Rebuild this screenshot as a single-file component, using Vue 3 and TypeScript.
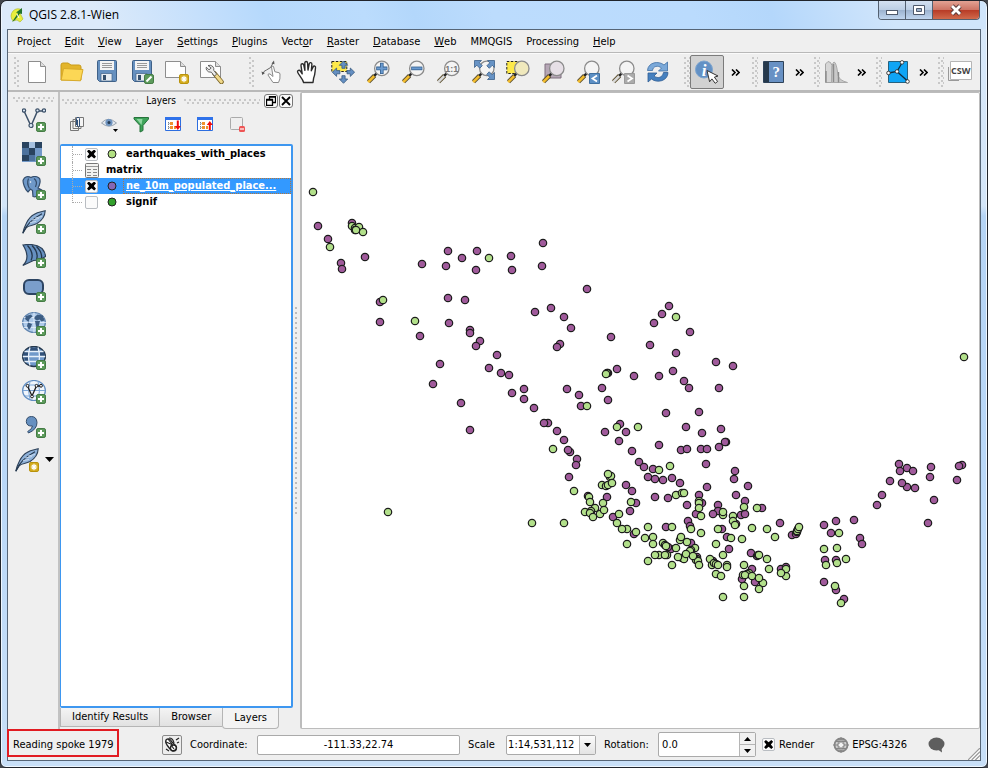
<script setup lang="ts">
import { ref } from 'vue'

interface Tool {
  icon: string
  label: string
  pressed?: boolean
}

interface Layer {
  name: string
  kind: 'point' | 'table'
  color?: string
  visible?: boolean
  selected?: boolean
}

const menus: [string, string, string][] = [
  ['Pro', 'j', 'ect'],
  ['', 'E', 'dit'],
  ['', 'V', 'iew'],
  ['', 'L', 'ayer'],
  ['', 'S', 'ettings'],
  ['', 'P', 'lugins'],
  ['Vect', 'o', 'r'],
  ['', 'R', 'aster'],
  ['', 'D', 'atabase'],
  ['', 'W', 'eb'],
  ['MMQGIS', '', ''],
  ['Processin', 'g', ''],
  ['', 'H', 'elp'],
]

const lens = (handle: string, fill = '#f4f4f4') =>
  `<path d="M2.5 21.8L8.6 15.6" stroke="#5d5030" stroke-width="4.4"/><path d="M2.2 22.1L8.4 15.8" stroke="${handle}" stroke-width="2.6"/><path d="M8.2 15.8L10.4 13.6" stroke="#222" stroke-width="2.4"/><circle cx="15.8" cy="8.4" r="7.2" fill="${fill}" stroke="#8b8b8b" stroke-width="1.3"/>`
const plus =
  '<rect x="14.5" y="14.5" width="9" height="9" rx="1.6" fill="#5d9b5c" stroke="#437a43"/><path d="M19 16v6M16 19h6" stroke="#fff" stroke-width="2"/>'
const star =
  '<rect x="14.5" y="14.5" width="9" height="9" rx="1.4" fill="#d3ab1c" stroke="#b8920b"/><path d="M19 15.8v6.4M15.8 19h6.4M16.8 16.8l4.4 4.4M21.2 16.8l-4.4 4.4" stroke="#fff" stroke-width="1.2"/>'
const disk =
  '<path d="M2.5 1.5q0-1 1-1h17q1 0 1 1v19q0 1-1 1h-16l-2-2z" fill="#6690bf" stroke="#3f6188"/><rect x="5" y="1" width="14" height="9" fill="#f4f4f4"/><path d="M7 3.5h10M7 5.5h10M7 7.5h10" stroke="#999"/><path d="M6 21v-7.5h11V21z" fill="#e9edf2" stroke="#3f6188" stroke-width=".7"/><rect x="8" y="15" width="3" height="5" fill="#36506d"/>'
const page =
  '<path d="M.5 1.5h15l5 5v11H.5z" fill="#fdfdfd" stroke="#8d8d8d"/><path d="M15.5 1.5v5h5" fill="#ddd" stroke="#8d8d8d"/>'
const feather =
  '<path d="M.8 23.2C2 17 6 7.500 12 4.500C16 1.800 20 1.800 23.200.800C23 6 20 10.500 15 13.500C10.500 16 7 15 4.500 17.500z" fill="#8fb2da" stroke="#2d4057" stroke-width="1.1"/><path d="M.8 23.2C4 15 11 8.500 20 3.800" fill="none" stroke="#24384e" stroke-width="1.100"/><path d="M8 12.500l6-1M10 10l7-1.500M13 8l7-1.500" stroke="#d7e5f5" stroke-width=".8"/>'
const dockGrid =
  '<path d="M.5 1.500h15v13H.5z" fill="#fff" stroke="#2d6ee0"/><path d="M0 1h16v3H0z" fill="#2f72ea"/><path d="M3.500 6v7M3.500 7.500h2M3.500 11.500h2" stroke="#77808c" stroke-dasharray="1 1"/><path d="M5 6h3v3H5zM5 10h3v3H5zM9 10h2v3H9z" fill="#f0912e"/>'
const hand =
  '<path d="M7.600 22.500C6.500 18.500 3 15.500 1.700 12.300C1 10.300 3.400 9.500 4.600 11.300L6.200 13.800L5 5.600C4.800 3.400 7.300 3 7.800 5.100L8.900 10.300L8.800 3.200C8.800.900 11.400.900 11.600 3.200L12 10L13.200 3.900C13.700 1.900 16 2.300 15.900 4.400L15.300 10.800L17 7.100C18 5.200 19.900 6 19.500 8C18.900 11.400 19.300 14.500 17.600 18.300L17 22.500z" fill="#fff" stroke="#2b2b2b" stroke-width="1.400" stroke-linejoin="round"/>'

const icons: Record<string, string> = {
  new: '<path d="M3.500 1.500h12l5 5v16h-17z" fill="#fff" stroke="#8d8d8d"/><path d="M15.500 1.500v5h5" fill="#ddd" stroke="#8d8d8d"/>',
  open: '<path d="M1 5q0-2 2-2h5l3 2h8q2 0 2 2v13H1z" fill="#e3b52c" stroke="#c99b19"/><path d="M3.500 8.500L23 9.500l-2.500 11.300L1.200 20z" fill="#fcd755" stroke="#d8aa2a"/>',
  save: disk,
  saveas:
    disk +
    '<rect x="14.500" y="14.500" width="9" height="9" rx="1.600" fill="#5d9b5c" stroke="#437a43"/><path d="M16.500 21.500l5-5" stroke="#fff" stroke-width="2"/>',
  print: page + star,
  manage:
    page +
    '<path d="M14.500 13.500l7 8.500" stroke="#7b6526" stroke-width="4.600" stroke-linecap="round"/><path d="M15 14l6.400 7.800" stroke="#f1d98b" stroke-width="3" stroke-linecap="round"/><path d="M8 5.500q3-1 5 1.200q1.200 1.700.7 3.500l3 4-2.400 1.800-3-3.800q-3 .4-4.600-2q-.8-1.400-.4-3l2.700 2.600 2.200-1.800z" fill="#ececec" stroke="#444" stroke-width=".8"/>',
  touch:
    '<path d="M12.500 6.500q-1.500-1-2 .5l1.500 9.500-3-2.500q-2-.8-2 1l5 7.500h5.500q2-3 1.500-8.500q-.5-1.800-2-1.500l-3.200-.8z" fill="#fff" stroke="#8a8a8a" stroke-linejoin="round"/><path d="M2 13.500q.5-2.500 3.500-3.500q5-1.500 6.500-7" fill="none" stroke="#555" stroke-width=".9"/><path d="M10.500 3.500l2.500-3 .5 3.800zM.5 11.500l.8 3.500 2.700-2z" fill="#555"/>',
  pan: hand,
  pansel:
    '<path d="M.8 1.500h15v10h-15z" fill="#fde94a" stroke="#222" stroke-dasharray="2.500 1.500"/><g fill="#648fc2" stroke="#36597f" stroke-width=".8"><path d="M12.500 1l4.200 4.300h-2.600v3h-3.200v-3H8.300zM12.500 23.300l4.200-4.300h-2.600v-3.300h-3.200V19H8.300zM1.300 12.200L5.600 8v2.600h3.300v3.200H5.600v2.600zM23.600 12.200L19.300 8v2.600H16v3.200h3.300v2.600z"/></g>',
  zoomin: lens('#f4bd2c') + '<path d="M15.800 2.800v11.200M10.200 8.400h11.200" stroke="#35608f" stroke-width="3.600"/><path d="M15.800 3.500v9.800M10.900 8.400h9.800" stroke="#6b9bd0" stroke-width="2"/>',
  zoomout: lens('#f4bd2c') + '<path d="M10.200 8.400h11.200" stroke="#35608f" stroke-width="3.600"/><path d="M10.900 8.400h9.800" stroke="#6b9bd0" stroke-width="2"/>',
  native: lens('#d9d9d9') + '<text x="15.800" y="11.600" text-anchor="middle" font-size="9" font-weight="bold" font-family="Liberation Sans, sans-serif" fill="#777">1:1</text>',
  full:
    lens('#f4bd2c') +
    '<g fill="#6793c5" stroke="#3a5f89" stroke-width=".8"><path d="M3.500.5h7L8.300 2.700l3 3-2.500 2.500-3-3-2.300 2.300zM23.500.5v7l-2.200-2.200-3 3-2.500-2.500 3-3L16.500.5zM23.500 19.500h-7l2.200-2.200-3-3 2.500-2.500 3 3 2.300-2.300z"/></g>',
  zoomsel: '<path d="M.8 1.500h12v12h-12z" fill="#fde94a" stroke="#222" stroke-dasharray="2.500 1.500"/>' + lens('#f4bd2c', '#f0e9bd'),
  zoomlayer: '<path d="M4 4h16v14H4z" fill="#b6a7b6" stroke="#7f6f7f"/>' + lens('#f4bd2c', '#e6dfe6'),
  last: lens('#f4bd2c') + '<path d="M13.500 13.500h10v10h-10z" fill="#5c8fc4" stroke="#3f6f9f"/><path d="M21 15.500l-4.500 3 4.500 3" fill="none" stroke="#fff" stroke-width="1.800"/>',
  next: lens('#d9d9d9') + '<path d="M13.500 13.500h10v10h-10z" fill="#ababab" stroke="#999"/><path d="M16.500 15.500l4.500 3-4.500 3" fill="none" stroke="#fff" stroke-width="1.800"/>',
  refresh:
    '<path d="M1.500 10.500C2 2 13 .5 18 5l3.500-3v9h-9l3-3C12 5 7 6 6.500 10.500z" fill="#7ba9d9" stroke="#3f6fa5" stroke-width=".8"/><path d="M22 12.500C22 21 11 23.500 5.500 19L2 22v-9h9l-3 3c4 3 8.500 1.500 9.500-3.500z" fill="#4680bf" stroke="#315e94" stroke-width=".8"/>',
  identify:
    '<circle cx="9" cy="9.500" r="8.500" fill="#6391c5" stroke="#7ca4cf"/><text x="9" y="15.500" text-anchor="middle" font-size="17" font-style="italic" font-weight="bold" font-family="Liberation Serif, serif" fill="#fff">i</text><path d="M12 10.500l11 5.500-3.600 1.200 3.200 4.300-2.400 1.800-3.300-4.400-2.300 2.900z" fill="#fff" stroke="#333"/>',
  help:
    '<path d="M1.500 1.500h20v21h-20z" fill="#6891c4" stroke="#2e4258"/><path d="M2 2h5v20H2z" fill="#26394c"/><text x="14.300" y="17" text-anchor="middle" font-size="15" font-family="Liberation Serif, serif" font-weight="bold" fill="#fff">?</text>',
  histogram:
    '<path d="M1.500 22.500V4L4 1.500q3 0 4 4v17z" fill="#d6d6d6" stroke="#a5a5a5"/><path d="M7.500 22.500Q7.500 2 10 2t4 13.500q1.500 5 9.500 7z" fill="#c9c9c9" stroke="#aaa"/><path d="M9.500 4v18M2 11v11.500M14.500 12v10.500" stroke="#8a8a8a" stroke-width="1.400"/>',
  topology:
    '<path d="M2.500 1.500h19v21h-19z" fill="#10a5f5" stroke="#27627f"/><path d="M2.500 13l8.500-1.500L16.500 2M11 11.500l10.500 9.500" fill="none" stroke="#122c3e" stroke-width="1.300"/><g fill="#fff" stroke="#333" stroke-width=".9"><circle cx="2.500" cy="13" r="1.800"/><circle cx="11" cy="11.500" r="1.800"/><circle cx="16" cy="2.400" r="1.800"/><circle cx="21.500" cy="21.500" r="1.800"/></g>',
  csw:
    '<path d="M.5 7v13.500H11" fill="#eee" stroke="#999"/><path d="M2.500 1.500h21v18h-21z" fill="#fff" stroke="#b5b5b5"/><text x="12.800" y="13.700" text-anchor="middle" font-size="9" font-weight="bold" font-family="Open Sans, sans-serif" fill="#444">CSW</text>',
  vector:
    '<path d="M2 3l7 15 6.500-15h6" fill="none" stroke="#3c5068" stroke-width="1.500"/><g fill="#dce8f4" stroke="#3c5068" stroke-width="1.200"><circle cx="2" cy="2.500" r="1.700"/><circle cx="9" cy="17.500" r="2"/><circle cx="15.500" cy="2.500" r="1.700"/><circle cx="22" cy="2.500" r="1.700"/></g>' + plus,
  raster:
    '<path d="M0 0h20v20H0z" fill="#7299c8"/><path d="M0 0h7v6H0zM13 0h7v6h-7zM7 6h6v7H7zM0 13h7v6H0z" fill="#29435f"/><path d="M0 6h7v7H0zM7 13h6v6H7z" fill="#4d729d"/><path d="M7 0h6v6H7z" fill="#a6c1e0"/>' + plus,
  postgis:
    '<path d="M2.500 2C5-.5 8 1 9 1.500c3-1.500 6-1 8 .5c2 1.500 1 7-1 10l3 1.500-4 1v5q-1 2-4 1l-.5-6-2-1.500-2.500 3C3 14 .500 6 1.200 4z" fill="#6e98c8" stroke="#344d6b" stroke-width="1.200"/><path d="M6.500 2.500q-2 5 1 10M12 2.500q4 3 1.500 8.500" fill="none" stroke="#344d6b" stroke-width="1.200"/><circle cx="8.500" cy="6" r=".8" fill="#fff"/>' + plus,
  spatialite: feather + plus,
  mssql:
    '<path d="M1 1q12-2 19 3.500q3.500 4 3.500 8q-6 4-12 4L.8 21.500Q9 14 1 1z" fill="#6690c0" stroke="#2c4058" stroke-width="1.200"/><path d="M5.500 1.500q7 8 3.500 15M10 1.500q7 7 4.500 14.500M14.500 2.500q6 6 5 12" fill="none" stroke="#23364b" stroke-width="1.300"/>' + plus,
  oracle: '<rect x="2" y="2" width="19" height="14" rx="5" fill="#7a9ecb" stroke="#2c4462" stroke-width="2"/>' + plus,
  wms:
    '<ellipse cx="12" cy="10.500" rx="11.400" ry="10" fill="#aecaea" stroke="#6084ae" stroke-width="1.200"/><path d="M0 10.500h24M12 .5v20M2 5.500h20M2 15.500h20" stroke="#e8f1fb" stroke-width=".8"/><path d="M4 4l5-1.500 1.500 2-3 2.500-1 3L3 7zM6 10.500l4 1.500-1 3-2 3-2-4zM12.500 5l3-2.500 5.500 1 1.500 5-3 1-2-2-2.500 1-2.500-1.500zM13 9h5l-1.500 6-2 1z" fill="#3d5d83"/>' + plus,
  wcs:
    '<ellipse cx="12" cy="10.500" rx="11.400" ry="10" fill="#7099ca" stroke="#25384d" stroke-width="1.400"/><path d="M2 5.500h5v5H1zM17 5.500h5l1 5h-6zM3 15.500h4v-5H2zM7 1.800h10v3.500H7z" fill="#31517a"/><path d="M.8 10.500h22.400M2.500 5.500h19M2.500 15.500h19M8 1.500q-3 9 0 18M16 1.500q3 9 0 18" fill="none" stroke="#e8f1fb" stroke-width="1.300"/>' + plus,
  wfs:
    '<ellipse cx="12" cy="10.500" rx="11.400" ry="10" fill="#f0f5fb" stroke="#5f8cc0" stroke-width="1.200"/><path d="M.8 10.500h22.400M2.500 5h19M2.500 16h19M8 1.500q-3 9 0 18M16 1.500q3 9 0 18" fill="none" stroke="#7ba5d6" stroke-width="1"/><path d="M5.500 6l4.500 10L14.500 6h5" fill="none" stroke="#1b1b1b" stroke-width="1.300"/><g fill="#fff" stroke="#1b1b1b"><circle cx="5.500" cy="5.800" r="1.400"/><circle cx="10" cy="16.500" r="1.400"/><circle cx="14.500" cy="5.800" r="1.400"/><circle cx="19" cy="5.800" r="1.400"/></g>' + plus,
  csv: '<path d="M9.500 2.500q5 0 5.500 6q0 7-8.500 10.500l-.8-1.500q4.500-2.500 4.800-5.500q-6 .5-6.200-4.500q.2-5 5.200-5z" fill="#6690c0" stroke="#344d6b"/>' + plus,
  newlayer: feather + star,
  group: '<path d="M1.500 5.500h8v9h-8zM4 3.500h8v9H4z" fill="#f4f4f4" stroke="#777"/><path d="M6.500 1.500h8v9h-8z" fill="#f4f4f4" stroke="#777"/><path d="M7.500 9V2.500q1.500-3 3 0V10q-1 2-2 0V4" fill="none" stroke="#31517a"/>',
  eye: '<path d="M.5 7Q7-.5 15.500 7Q8 13.500.5 7z" fill="#e4e9ef" stroke="#98a2ad"/><circle cx="8" cy="6.500" r="3.600" fill="#6f94c0"/><circle cx="8" cy="6.500" r="1.500" fill="#263b52"/><path d="M12 13h5l-2.500 3z" fill="#000"/>',
  filter: '<path d="M1 1.500h14.500v1.500L10 9.500v5L7 16V9.500L1 3z" fill="#3da359" stroke="#26733b"/><path d="M3.500 3h6L8.500 9z" fill="#8ed6a0"/>',
  expand: dockGrid + '<path d="M11.800 4.500h2V10h2l-3 4-3-4h2z" fill="#f00c0c"/>',
  collapse: dockGrid + '<path d="M11.800 14v-5h-2l3-4 3 4h-2v5z" fill="#f00c0c"/>',
  remove: '<rect x="1.500" y="1.500" width="12" height="12" rx="1" fill="#efefef" stroke="#aaa"/><rect x="10" y="10" width="6" height="6" rx="1.500" fill="#e55"/><path d="M11 13h4" stroke="#fff" stroke-width="1.200"/>',
}

const fileTools: Tool[] = [
  { icon: 'new', label: 'New project' },
  { icon: 'open', label: 'Open project' },
  { icon: 'save', label: 'Save project' },
  { icon: 'saveas', label: 'Save project as' },
  { icon: 'print', label: 'New print composer' },
  { icon: 'manage', label: 'Composer manager' },
]
const navTools: Tool[] = [
  { icon: 'touch', label: 'Touch zoom and pan' },
  { icon: 'pan', label: 'Pan map' },
  { icon: 'pansel', label: 'Pan map to selection' },
  { icon: 'zoomin', label: 'Zoom in' },
  { icon: 'zoomout', label: 'Zoom out' },
  { icon: 'native', label: 'Zoom to native resolution' },
  { icon: 'full', label: 'Zoom full' },
  { icon: 'zoomsel', label: 'Zoom to selection' },
  { icon: 'zoomlayer', label: 'Zoom to layer' },
  { icon: 'last', label: 'Zoom last' },
  { icon: 'next', label: 'Zoom next' },
  { icon: 'refresh', label: 'Refresh' },
]
const overflowTools: Tool[] = [
  { icon: 'identify', label: 'Identify features', pressed: true },
  { icon: 'help', label: 'Help contents' },
  { icon: 'histogram', label: 'Local histogram stretch' },
  { icon: 'topology', label: 'Topology checker' },
]
const sideTools: Tool[] = [
  { icon: 'vector', label: 'Add vector layer' },
  { icon: 'raster', label: 'Add raster layer' },
  { icon: 'postgis', label: 'Add PostGIS layer' },
  { icon: 'spatialite', label: 'Add SpatiaLite layer' },
  { icon: 'mssql', label: 'Add MSSQL layer' },
  { icon: 'oracle', label: 'Add Oracle layer' },
  { icon: 'wms', label: 'Add WMS layer' },
  { icon: 'wcs', label: 'Add WCS layer' },
  { icon: 'wfs', label: 'Add WFS layer' },
  { icon: 'csv', label: 'Add delimited text layer' },
]
const dockTools: Tool[] = [
  { icon: 'group', label: 'Add group' },
  { icon: 'eye', label: 'Manage layer visibility' },
  { icon: 'filter', label: 'Filter legend' },
  { icon: 'expand', label: 'Expand all' },
  { icon: 'collapse', label: 'Collapse all' },
  { icon: 'remove', label: 'Remove layer' },
]

const layers = ref<Layer[]>([
  { name: 'earthquakes_with_places', kind: 'point', color: '#b2e082', visible: true },
  { name: 'matrix', kind: 'table' },
  { name: 'ne_10m_populated_place...', kind: 'point', color: '#8567b5', visible: true, selected: true },
  { name: 'signif', kind: 'point', color: '#33a02c', visible: false },
])

const dockTabs = ['Identify Results', 'Browser', 'Layers']
const activeTab = ref('Layers')
const coordinate = ref('-111.33,22.74')
const scale = ref('1:14,531,112')
const rotation = ref('0.0')
const render = ref(true)

const parse = (text: string) => text.trim().split(/\s+/).map((pair) => pair.split(',').map(Number))

const places = parse(`
318,226 328,239 352,223 365,257 341,263 342,269 422,264 448,251 446,266 462,258 477,251 476,270 511,256 512,270
543,243 542,266 380,302 380,322 420,336 448,298 465,300 449,323 470,330 470,333 480,341 476,346 497,355 440,364
433,384 489,368 501,373 509,375 512,393 524,389 524,399 534,408 461,403 470,430 548,423 544,423 557,431 564,440
535,312 551,308 564,317 571,328 560,344 557,347 587,289 567,389 579,395 581,406 669,306 662,314 654,323 690,332
650,345 676,353 611,337 716,362 733,366 617,369 608,373 634,376 659,376 673,371 684,381 689,388 719,388 602,388
608,400 666,413 699,412 620,424 605,432 626,432 619,441 659,445 632,451 686,427 702,433 721,429 681,450 687,449
701,449 707,449 719,447 726,442 725,442 706,464 570,452 568,450 577,459 576,465 569,477 639,462 644,467 653,469
735,471 734,479 748,486 648,477 655,479 663,480 672,478 680,483 626,485 632,491 636,503 630,511 707,487 699,495
736,495 745,501 655,497 668,498 687,505 718,505 718,511 713,514 762,508 741,515 745,514 696,514 607,497 613,517
588,496 688,521 690,526 702,503 666,527 634,534 722,529 736,524 727,537 729,549 691,543 671,549 668,547 780,523
792,535 796,534 797,532 751,553 757,556 752,569 742,579 755,582 781,569 786,567 697,557 713,561 899,464 907,468
900,471 913,471 931,467 962,465 959,466 957,480 930,477 890,481 907,487 902,483 915,488 882,495 877,505 934,500
928,523 824,525 836,521 854,520 831,533 860,538 862,544 825,560 836,560 824,582 836,590 844,599`)

const quakes = parse(`
313,192 352,226 355,228 359,227 363,232 355,230 356,230 330,247 489,258 383,300 415,321 587,406 553,449 676,317
607,373 606,374 617,427 638,427 659,470 670,466 388,512 532,523 574,491 564,523 610,477 611,476 608,474 602,485
606,486 608,485 612,483 589,497 590,502 585,512 595,508 591,511 590,513 603,503 600,514 604,510 593,517 619,514
617,523 627,529 622,529 636,532 627,544 645,538 653,537 653,544 648,527 672,527 631,502 676,495 682,493 684,493
699,501 699,503 699,508 701,516 691,529 701,533 723,515 723,512 718,529 733,516 733,521 735,525 731,538 742,539
744,507 757,508 752,528 767,529 775,537 797,531 798,529 799,527 716,544 723,555 648,561 672,565 659,555 655,555
667,555 665,555 663,543 665,545 666,546 676,548 680,540 681,537 687,542 695,548 691,550 690,551 682,558 684,559
678,557 686,554 697,559 696,560 698,561 693,556 699,565 710,559 712,565 714,563 716,564 718,565 727,565 727,567
716,574 721,576 723,597 744,597 744,565 743,575 749,573 747,574 745,575 752,576 763,583 759,578 759,589 744,586
758,555 759,555 767,559 769,569 786,576 786,569 781,573 964,357 839,533 824,549 837,548 846,559 826,565 837,563
835,586 841,603`)
</script>

<template>
  <div class="window">
    <header class="titlebar">
      <svg class="app-icon" viewBox="0 0 14 16" aria-hidden="true">
        <path d="M3 4Q7 0 12 3l-2 3 3 6-3 3-3-2-4 1Q-1 9 3 4z" fill="#e8ee3c" stroke="#a9b52c" stroke-width=".6" />
        <path d="M2 15L8 6l-2-.5L12 1v6L10 6.500 5 13z" fill="#23742c" />
        <path d="M7 7l2 4" stroke="#fff" />
      </svg>
      <h1>QGIS 2.8.1-Wien</h1>
      <div class="caption">
        <button aria-label="Minimize"><svg viewBox="0 0 14 12"><rect x="1.500" y="6.500" width="11" height="4" fill="#fff" stroke="#4f5a6c" /></svg></button>
        <button aria-label="Maximize"><svg viewBox="0 0 14 12"><path d="M1.500 1.500h11v9h-11z" fill="#fff" stroke="#4f5a6c" /><path d="M4.500 4.500h5v3h-5z" fill="#9eb3cc" stroke="#4f5a6c" /></svg></button>
        <button class="close" aria-label="Close"><svg viewBox="0 0 14 12"><path d="M3 2l8 8M11 2l-8 8" stroke="#5b3a3a" stroke-width="4.600" /><path d="M3 2l8 8M11 2l-8 8" stroke="#fff" stroke-width="2.800" /></svg></button>
      </div>
    </header>

    <div class="client">
      <nav class="menubar">
        <button v-for="m in menus" :key="m.join('')">{{ m[0] }}<u>{{ m[1] }}</u>{{ m[2] }}</button>
      </nav>

      <div class="toolbars" role="toolbar" aria-label="Main toolbars">
        <div class="group file">
          <i class="grip"></i>
          <button v-for="t in fileTools" :key="t.icon" class="tool" :aria-label="t.label"><svg class="icon" viewBox="0 0 24 24" fill="none" v-html="icons[t.icon]"></svg></button>
        </div>
        <div class="group nav">
          <i class="grip"></i>
          <button v-for="t in navTools" :key="t.icon" class="tool" :aria-label="t.label"><svg class="icon" viewBox="0 0 24 24" fill="none" v-html="icons[t.icon]"></svg></button>
        </div>
        <div v-for="t in overflowTools" :key="t.icon" class="group compact">
          <i class="grip"></i>
          <button class="tool" :class="{ pressed: t.pressed }" :aria-label="t.label"><svg class="icon" viewBox="0 0 24 24" fill="none" v-html="icons[t.icon]"></svg></button>
          <button class="more" aria-label="More tools"><svg viewBox="0 0 9 7"><path d="M1 .5l3 3-3 3M5 .5l3 3-3 3" fill="none" stroke="#000" stroke-width="1.600" /></svg></button>
        </div>
        <div class="group compact">
          <i class="grip"></i>
          <button class="tool" aria-label="Catalogue search"><svg class="icon" viewBox="0 0 24 24" fill="none" v-html="icons.csw"></svg></button>
        </div>
      </div>

      <div class="workspace">
        <aside class="sidebar" role="toolbar" aria-label="Manage layers">
          <i class="grip flat"></i>
          <button v-for="t in sideTools" :key="t.icon" class="tool" :aria-label="t.label"><svg class="icon" viewBox="0 0 24 24" fill="none" v-html="icons[t.icon]"></svg></button>
          <button class="tool split" aria-label="New layer">
            <svg class="icon" viewBox="0 0 24 24" fill="none" v-html="icons.newlayer"></svg>
            <svg class="arrow" viewBox="0 0 9 5"><path d="M0 0h9L4.500 5z" /></svg>
          </button>
        </aside>

        <section class="dock" aria-label="Layers panel">
          <div class="dock-title">
            <i class="grip flat"></i>
            <h2>Layers</h2>
            <i class="grip flat"></i>
            <div class="dock-buttons">
              <button aria-label="Float panel"><svg viewBox="0 0 10 10"><path d="M3.500 3V.5h6v6H7M3.500 1h6M.5 3.500h6v6h-6zM.5 4h6" fill="none" stroke="#000" stroke-width="1.300" /></svg></button>
              <button aria-label="Close panel"><svg viewBox="0 0 10 10"><path d="M1 1l8 8M9 1L1 9" stroke="#000" stroke-width="1.800" /></svg></button>
            </div>
          </div>
          <div class="dock-tools">
            <button v-for="t in dockTools" :key="t.icon" :aria-label="t.label"><svg viewBox="0 0 16 16" fill="none" v-html="icons[t.icon]"></svg></button>
          </div>
          <ul class="tree">
            <li v-for="layer in layers" :key="layer.name" :class="{ selected: layer.selected }">
              <i class="branch"></i>
              <template v-if="layer.kind === 'point'">
                <input :id="layer.name" v-model="layer.visible" type="checkbox" />
                <svg class="symbol" viewBox="0 0 10 10"><circle cx="5" cy="5" r="4" :fill="layer.color" stroke="#222" /></svg>
                <label :for="layer.name">{{ layer.name }}</label>
              </template>
              <template v-else>
                <svg class="table-icon" viewBox="0 0 14 15"><rect x=".5" y=".5" width="13" height="14" rx="1" fill="#f2f2f0" stroke="#777" /><path d="M1 3.500h12" stroke="#999" /><path d="M2 6.500h10M2 9.500h10M2 12.500h10" stroke="#888" stroke-dasharray="4 2" /></svg>
                <span class="name">{{ layer.name }}</span>
              </template>
            </li>
          </ul>
          <div class="tabs" role="tablist">
            <button v-for="tab in dockTabs" :key="tab" role="tab" :class="{ active: tab === activeTab }" :aria-selected="tab === activeTab" @click="activeTab = tab">{{ tab }}</button>
          </div>
        </section>

        <div class="splitter"><i></i></div>

        <main class="map">
          <svg role="img" aria-label="Map canvas">
            <g transform="translate(-302 -93)" stroke="#1c1c1c" stroke-width="1.200">
              <g fill="#a05a9b"><circle v-for="(p, i) in places" :key="i" :cx="p[0]" :cy="p[1]" r="3.700" /></g>
              <g fill="#b2e08a"><circle v-for="(p, i) in quakes" :key="i" :cx="p[0]" :cy="p[1]" r="3.700" /></g>
            </g>
          </svg>
        </main>
      </div>

      <footer class="status">
        <output class="message">Reading spoke 1979</output>
        <button class="toggle" aria-label="Toggle extents and mouse position">
          <svg viewBox="0 0 16 16" fill="none" stroke="#222"><path d="M2 3q3-3 6 2l3 3q3 3 0 5t-5-1L3 8Q1 5 2 3z" fill="#fff" stroke-width="1.300" /><path d="M4 2l4 5M2 5l7 3M7 8l3 4M5 1q4 0 5 5M12 3l3-2M13 6l2-1M2 12l3 2" stroke-width="1.200" /><circle cx="9.500" cy="11" r="3" stroke-width="1.300" /></svg>
        </button>
        <label class="coord-label" for="coord">Coordinate:</label>
        <input id="coord" v-model="coordinate" class="coord" type="text" />
        <label class="scale-label" for="scale">Scale</label>
        <div class="combo">
          <select id="scale" v-model="scale"><option>1:14,531,112</option></select>
          <span class="drop"><svg viewBox="0 0 9 5"><path d="M0 0h9L4.500 5z" /></svg></span>
        </div>
        <label class="rot-label" for="rot">Rotation:</label>
        <div class="spin">
          <input id="rot" v-model="rotation" type="text" />
          <div class="steps">
            <button aria-label="Increase rotation"><svg viewBox="0 0 7 4"><path d="M0 4h7L3.500 0z" /></svg></button>
            <button aria-label="Decrease rotation"><svg viewBox="0 0 7 4"><path d="M0 0h7L3.500 4z" /></svg></button>
          </div>
        </div>
        <input id="render" v-model="render" class="render" type="checkbox" />
        <label for="render">Render</label>
        <button class="crs">
          <svg viewBox="0 0 16 16" fill="none" stroke="#858585"><circle cx="8" cy="8" r="6.500" fill="#d2d2d2" stroke-width="1.800" /><ellipse cx="8" cy="8" rx="3" ry="6" /><path d="M0 8h16M8 0v16M3 4.500h10M3 11.500h10" /><path d="M8 4.500L11.500 8 8 11.500 4.500 8z" fill="#f2f2f2" /></svg>
          EPSG:4326
        </button>
        <button class="bubble" aria-label="Messages"><svg viewBox="0 0 17 16"><ellipse cx="8.500" cy="7" rx="8" ry="6.500" fill="#5e5e5e" /><path d="M9 12l5 3.500-.5-5z" fill="#5e5e5e" /></svg></button>
        <svg class="resize" viewBox="0 0 13 13"><path d="M0 13L13 0M4 13l9-9M8 13l5-5" stroke="#999" stroke-width="1.300" /><path d="M2 13L13 2M6 13l7-7M10 13l3-3" stroke="#fff" /></svg>
      </footer>
    </div>
  </div>
</template>

<style>
body {
  margin: 0;
  background: #43464c;
}
</style>

<style scoped>
.window {
  box-sizing: border-box;
  height: 100vh;
  min-height: 480px;
  display: flex;
  flex-direction: column;
  padding: 0 6px 6px;
  border: 1px solid #20242b;
  border-radius: 7px 7px 6px 6px;
  background: linear-gradient(#d8e8f9, #d3e5f8 205px, #b5d4f5 215px, #b9d7f7 60%, #c8dff7);
  box-shadow: inset 0 0 0 1px #eef6fe;
  font: 11px/16px "DejaVu Sans Condensed", "DejaVu Sans", sans-serif;
  color: #000;
}
button,
input,
select {
  font: inherit;
  color: inherit;
  margin: 0;
}
button {
  display: flex;
  align-items: center;
  justify-content: center;
  padding: 0;
  border: 0;
  background: none;
}
svg {
  display: block;
  flex: none;
}
h1,
h2,
ul {
  margin: 0;
  padding: 0;
  font-weight: normal;
}
.titlebar {
  flex: none;
  height: 28px;
  margin: 0 -5px;
  padding: 0 6px 0 8px;
  display: flex;
  align-items: center;
  border-radius: 6px 6px 0 0;
  background: linear-gradient(70deg, #dceafa 0 10%, #c6e0fc 20%, #b6d9fc 27%, #bbdcfd 37%, #b3d7fb 42%, #bcdcfd 50%, #badbfd 70%, #b4d7fb 78%, #d0e5fb 90%);
}
.app-icon {
  width: 14px;
  height: 16px;
}
h1 {
  margin-left: 5px;
  font: 12px/18px "Open Sans", "Noto Sans", sans-serif;
}
.caption {
  align-self: flex-start;
  margin-left: auto;
  display: flex;
  border: 1px solid #536070;
  border-top: 0;
  border-radius: 0 0 4px 4px;
  overflow: hidden;
}
.caption button {
  width: 27px;
  height: 18px;
  border-right: 1px solid #536070;
  background: linear-gradient(#d4e1f1, #bccee4 48%, #9bb2cf 50%, #bfd5ee);
}
.caption svg {
  width: 14px;
  height: 12px;
}
.caption .close {
  width: 46px;
  border-right: 0;
  background: linear-gradient(#e2a294, #cd7565 48%, #b73a25 50%, #d06a4c);
}
.client {
  flex: 1;
  min-height: 0;
  display: flex;
  flex-direction: column;
  border: 1px solid #566576;
  background: #efefef;
}
.menubar {
  flex: none;
  height: 20px;
  display: flex;
  padding: 2px 0 0 2px;
  border-bottom: 1px solid #b8b8b8;
}
.menubar button {
  padding: 0 7px;
}
.toolbars {
  flex: none;
  height: 36px;
  display: flex;
  align-items: center;
  padding-left: 6px;
  border-top: 1px solid #fafafa;
  border-bottom: 2px solid #b9b9b9;
}
.group {
  display: flex;
  align-items: center;
}
.file,
.nav {
  gap: 1px;
}
.file {
  margin-right: 20px;
}
.nav {
  margin-right: 9px;
}
.nav .grip {
  margin-right: 1px;
}
.compact {
  margin-right: 6px;
}
.grip {
  flex: none;
  width: 5px;
  height: 30px;
  background:
    radial-gradient(circle at 1px 1px, #c8c8c8 1px, transparent 1px) 0 0 / 5px 5px,
    radial-gradient(circle at 1px 1px, #c8c8c8 1px, transparent 1px) 3px 3px / 5px 5px;
}
.tool {
  width: 34px;
  height: 34px;
}
.icon {
  width: 24px;
  height: 24px;
}
.compact .grip {
  width: 6px;
}
.compact .tool {
  box-sizing: border-box;
  width: 32px;
}
.compact .pressed {
  width: 34px;
  border: 1px solid #7b7b7b;
  border-radius: 2px;
  background: #d2d2d2;
}
.more {
  width: 18px;
  height: 34px;
}
.pressed + .more {
  width: 22px;
}
.more svg {
  width: 9px;
  height: 7px;
}
.workspace {
  flex: 1;
  min-height: 0;
  display: flex;
}
.sidebar {
  flex: none;
  width: 50px;
  display: flex;
  flex-direction: column;
  align-items: center;
  padding-top: 5px;
  border-right: 2px solid #c2c2c2;
}
.grip.flat {
  height: 5px;
}
.sidebar .grip {
  width: 41px;
}
.sidebar .icon {
  margin-top: 2px;
}
.sidebar .tool {
  padding-left: 2px;
}
.sidebar .split {
  width: 50px;
  gap: 6px;
  padding-left: 3px;
}
.arrow {
  width: 9px;
  height: 5px;
}
.dock {
  flex: none;
  width: 233px;
  display: flex;
  flex-direction: column;
}
.dock-title {
  height: 18px;
  display: flex;
  align-items: center;
  gap: 8px;
  padding-left: 2px;
}
.dock-title .grip {
  flex: 1;
}
h2 {
  font-size: 10px;
}
.dock-buttons {
  display: flex;
  gap: 1px;
  margin-left: -4px;
}
.dock-buttons button {
  width: 14px;
  height: 14px;
  border: 1px solid #777;
  border-radius: 3px;
  background: #fafafa;
  box-sizing: border-box;
}
.dock-buttons svg {
  width: 10px;
  height: 10px;
}
.dock-tools {
  height: 28px;
  display: flex;
  gap: 16px;
  padding: 0 0 6px 9px;
}
.dock-tools svg {
  width: 16px;
  height: 16px;
  overflow: visible;
}
.tree {
  flex: 1;
  min-height: 0;
  border: 2px solid #3e97f0;
  border-left-width: 1px;
  border-radius: 2px;
  background: #fff;
  list-style: none;
  font-weight: bold;
}
.tree li {
  height: 16px;
  display: flex;
  align-items: center;
  padding-left: 11px;
}
.tree .selected {
  background: #3399ff;
  color: #fff;
  text-decoration: underline;
}
.branch {
  align-self: stretch;
  width: 10px;
  margin-right: 2px;
  border-left: 1px dotted #aaa;
  background: linear-gradient(90deg, #aaa 50%, transparent 50%) 0 8px / 2px 1px repeat-x;
}
.tree li:last-child .branch {
  height: 9px;
  align-self: flex-start;
}
input[type="checkbox"] {
  flex: none;
  appearance: none;
  box-sizing: border-box;
  width: 13px;
  height: 13px;
  display: grid;
  place-items: center;
  border: 1px solid #b9bdc2;
  border-radius: 2px;
  background: #fbfbfb;
}
input[type="checkbox"]:checked::before {
  content: "";
  width: 9px;
  height: 9px;
  background: #000;
  clip-path: polygon(0 20%, 20% 0, 50% 25%, 80% 0, 100% 20%, 75% 50%, 100% 80%, 80% 100%, 50% 75%, 20% 100%, 0 80%, 25% 50%);
}
.symbol {
  width: 10px;
  height: 10px;
  margin: 0 6px 0 9px;
}
.tree label {
  flex: 1;
  min-width: 0;
  height: 16px;
  padding-left: 3px;
  box-sizing: border-box;
  white-space: nowrap;
}
.selected label {
  outline: 1px dotted #b4763a;
  outline-offset: -1px;
}
.table-icon {
  width: 14px;
  height: 15px;
}
.name {
  margin-left: 7px;
}
.tabs {
  flex: none;
  height: 21px;
  display: flex;
  align-items: flex-start;
}
.tabs button {
  height: 19px;
  padding: 0 11px;
  border: 1px solid #b5b5b5;
  border-top: 0;
  border-right: 0;
  background: linear-gradient(#f4f4f4, #e1e1e1);
}
.tabs .active {
  height: 21px;
  border-right: 1px solid #b5b5b5;
  border-radius: 0 0 4px 4px;
  background: #f3f3f3;
}
.splitter {
  flex: none;
  width: 7px;
  display: flex;
  align-items: center;
  justify-content: center;
}
.splitter i {
  width: 3px;
  height: 208px;
  background: radial-gradient(circle at 1px 1px, #bcbcbc 1px, transparent 1px) 0 0 / 5px 5px;
}
.map {
  flex: 1;
  min-width: 0;
  display: flex;
  border: solid #bcbcbc;
  border-width: 1px 1px 1px 2px;
  border-radius: 2px;
  background: #fff;
}
.map svg {
  flex: 1;
  width: 100%;
  height: 100%;
}
.status {
  flex: none;
  height: 31px;
  display: flex;
  align-items: center;
}
.message {
  align-self: flex-start;
  box-sizing: border-box;
  width: 112px;
  height: 28px;
  margin-left: -1px;
  padding-left: 4px;
  border: 2px solid #e11b22;
  line-height: 27px;
  white-space: nowrap;
}
.toggle {
  box-sizing: border-box;
  width: 20px;
  height: 20px;
  margin-left: 43px;
  border: 1px solid #8b8b8b;
  border-radius: 2px;
  background: #eee;
}
.toggle svg,
.crs svg {
  width: 16px;
  height: 16px;
}
.coord-label {
  width: 59px;
  margin: 0 8px;
}
.coord,
.combo,
.spin {
  box-sizing: border-box;
  height: 20px;
  border: 1px solid #aaa;
  border-radius: 2px;
  background: #fff;
}
.coord {
  flex: 1;
  min-width: 80px;
  text-align: center;
}
.scale-label {
  width: 30px;
  margin: 0 8px;
}
.combo {
  position: relative;
  width: 90px;
}
.combo select {
  width: 100%;
  height: 18px;
  padding: 0 0 0 1px;
  appearance: none;
  border: 0;
  background: none;
}
.drop {
  position: absolute;
  top: 0;
  right: 0;
  width: 15px;
  height: 18px;
  display: grid;
  place-items: center;
  border-left: 1px solid #b5b5b5;
  background: linear-gradient(#fbfbfb, #e3e3e3);
  pointer-events: none;
}
.drop svg,
.steps svg {
  width: 7px;
  height: 4px;
}
.rot-label {
  width: 46px;
  margin: 0 8px;
}
.spin {
  width: 98px;
  height: 25px;
  display: flex;
}
.spin input {
  flex: 1;
  min-width: 0;
  padding: 0 3px;
  border: 0;
  background: none;
}
.steps {
  width: 15px;
  display: flex;
  flex-direction: column;
  border-left: 1px solid #b5b5b5;
}
.steps button {
  flex: 1;
  background: #f1f1f1;
}
.steps button + button {
  border-top: 1px solid #b5b5b5;
}
.render {
  margin: 0 4px 0 6px;
}
.crs {
  gap: 3px;
  margin-left: 19px;
}
.bubble {
  margin: 0 23px 0 21px;
}
.bubble svg {
  width: 17px;
  height: 16px;
}
.resize {
  width: 12px;
  height: 12px;
  align-self: flex-end;
}
</style>
